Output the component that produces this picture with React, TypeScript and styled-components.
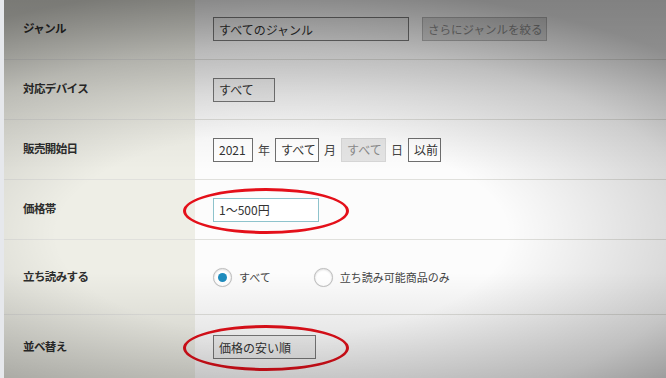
import React from "react";
import styled, { createGlobalStyle } from "styled-components";

const GlobalStyle = createGlobalStyle`
  html, body { margin: 0; padding: 0; }
  body {
    width: 666px;
    height: 378px;
    overflow: hidden;
    font-family: "Noto Sans CJK JP", "Noto Sans", sans-serif;
    color: #333;
  }
`;

const Screen = styled.div`
  position: relative;
  width: 666px;
  height: 378px;
  overflow: hidden;
  background: #fcfcfc;
  border-left: 4px solid #e6e8ec;
  box-sizing: border-box;
`;

// photo-like darkening towards the top and bottom corners
const Vignette = styled.div`
  position: absolute;
  inset: 0;
  pointer-events: none;
  background:
    radial-gradient(ellipse 85% 66% at 42% 62%, rgba(0,0,0,0) 40%, rgba(0,0,0,0.16) 75%, rgba(0,0,0,0.36) 100%),
    linear-gradient(to bottom, rgba(0,0,0,0.2) 0%, rgba(0,0,0,0.06) 25%, rgba(0,0,0,0) 45%, rgba(0,0,0,0) 72%, rgba(0,0,0,0.14) 100%);
`;

const Table = styled.div`
  display: flex;
  flex-direction: column;
  margin-top: -1px;
`;

const Row = styled.div<{ $h: number; $last?: boolean }>`
  display: grid;
  grid-template-columns: 191px 1fr;
  height: ${(p) => p.$h}px;
  box-sizing: border-box;
  border-bottom: ${(p) => (p.$last ? "none" : "1px solid #e0e0dc")};
`;

const Label = styled.div`
  background: #eeeee6;
  display: flex;
  align-items: center;
  padding-left: 19px;
  padding-bottom: 3px;
  font-size: 11.5px;
  letter-spacing: -0.6px;
  font-weight: 700;
  color: #2e2e2e;
`;

const Field = styled.div`
  display: flex;
  align-items: center;
  padding-left: 18px;
  gap: 5px;
  font-size: 12px;
`;

const Box = styled.div<{ $w: number; $grey?: boolean; $focus?: boolean }>`
  position: relative;
  width: ${(p) => p.$w}px;
  height: 24px;
  box-sizing: border-box;
  border: 1px solid ${(p) => (p.$focus ? "#8ec3cc" : p.$grey ? "#d6d6d6" : "#6f6f6f")};
  background: ${(p) => (p.$grey ? "#e4e4e4" : "#fff")};
  color: ${(p) => (p.$grey ? "#8a8a8a" : "#333")};
  display: flex;
  align-items: center;
  padding-left: 5px;
  font-size: 12px;
  white-space: nowrap;
`;

const SelectBox = styled(Box)`
  border-color: #7a7a7a;
  background: #f2f2f2;
`;

const GreyButton = styled.div`
  margin-left: 8px;
  width: 125px;
  height: 24px;
  box-sizing: border-box;
  padding-left: 5px;
  border: 1px solid #b8b8b8;
  background: #dcdcdc;
  color: #8a8a8a;
  font-size: 11.5px;
  display: flex;
  align-items: center;
  white-space: nowrap;
`;

const Unit = styled.span`
  font-size: 12px;
  color: #444;
`;

const Ring = styled.div`
  position: absolute;
  left: -31px;
  top: -11px;
  width: 166px;
  height: 46px;
  box-sizing: border-box;
  border: 3.5px solid #e4101a;
  border-radius: 50%;
  pointer-events: none;
`;

const RadioGroup = styled.label<{ $gap?: number }>`
  display: flex;
  align-items: center;
  gap: 7px;
  margin-right: ${(p) => p.$gap ?? 0}px;
  font-size: 11px;
  color: #444;
`;

const RadioDot = styled.span<{ $on?: boolean }>`
  width: 19px;
  height: 19px;
  box-sizing: border-box;
  border-radius: 50%;
  border: 1px solid #c0c0c0;
  background: #fff;
  box-shadow: inset 0 1px 2px rgba(0,0,0,0.12), 0 0 1px rgba(0,0,0,0.15);
  display: flex;
  align-items: center;
  justify-content: center;
  &::after {
    content: "";
    width: 9px;
    height: 9px;
    border-radius: 50%;
    background: ${(p) => (p.$on ? "#1e8cbe" : "transparent")};
  }
`;

export default function App() {
  return (
    <>
      <GlobalStyle />
      <Screen>
        <Table>
          <Row $h={61}>
            <Label>ジャンル</Label>
            <Field>
              <SelectBox $w={196}>すべてのジャンル</SelectBox>
              <GreyButton>さらにジャンルを絞る</GreyButton>
            </Field>
          </Row>
          <Row $h={60}>
            <Label>対応デバイス</Label>
            <Field>
              <SelectBox $w={62}>すべて</SelectBox>
            </Field>
          </Row>
          <Row $h={60}>
            <Label>販売開始日</Label>
            <Field>
              <Box $w={40}>2021</Box>
              <Unit>年</Unit>
              <Box $w={44}>すべて</Box>
              <Unit>月</Unit>
              <Box $w={45} $grey>すべて</Box>
              <Unit>日</Unit>
              <Box $w={33}>以前</Box>
            </Field>
          </Row>
          <Row $h={60}>
            <Label>価格帯</Label>
            <Field>
              <Box $w={106} $focus>
                1～500円
                <Ring />
              </Box>
            </Field>
          </Row>
          <Row $h={75}>
            <Label>立ち読みする</Label>
            <Field>
              <RadioGroup $gap={38}>
                <RadioDot $on />
                すべて
              </RadioGroup>
              <RadioGroup>
                <RadioDot />
                立ち読み可能商品のみ
              </RadioGroup>
            </Field>
          </Row>
          <Row $h={64} $last>
            <Label>並べ替え</Label>
            <Field>
              <SelectBox $w={103}>
                価格の安い順
                <Ring />
              </SelectBox>
            </Field>
          </Row>
        </Table>
        <Vignette />
      </Screen>
    </>
  );
}
